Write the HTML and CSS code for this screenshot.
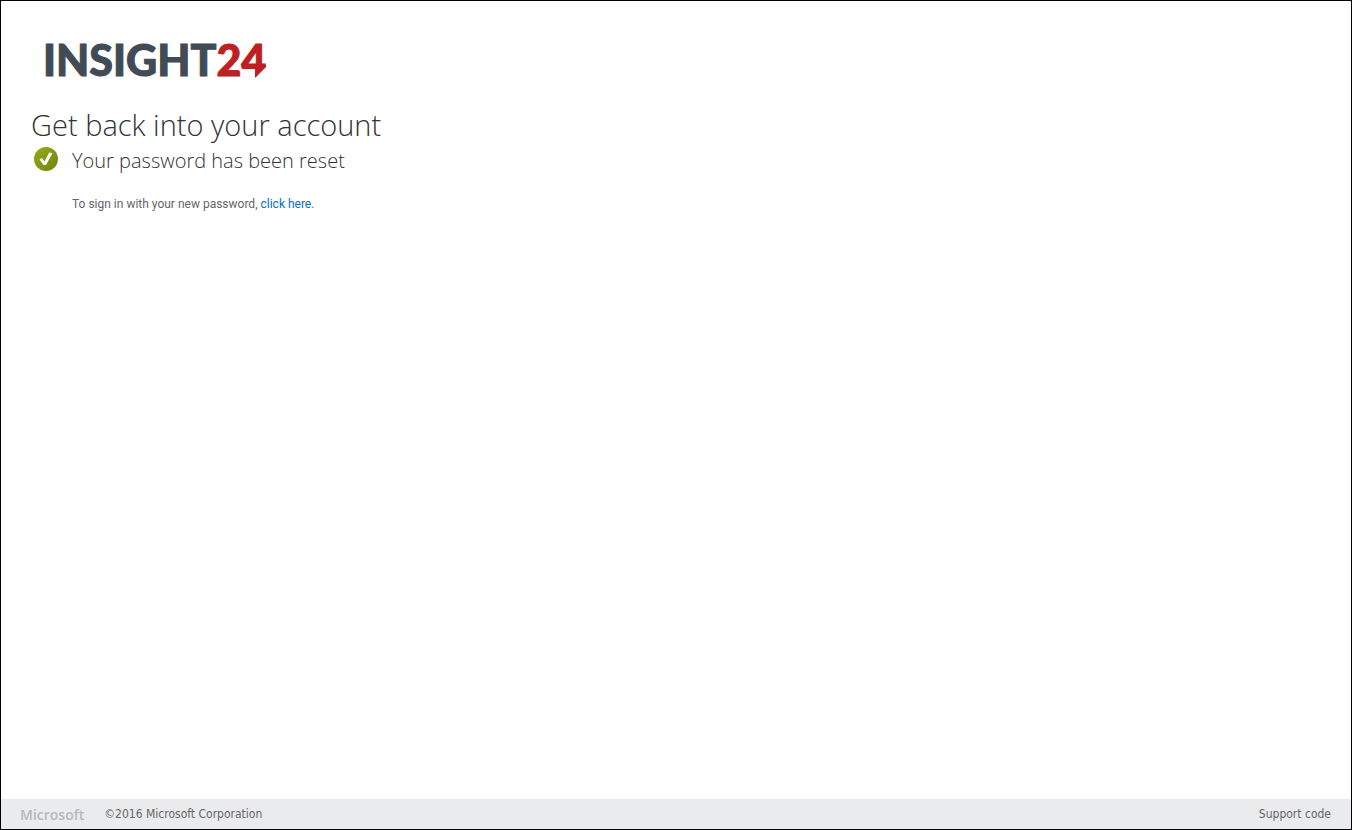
FILE: index.html
```
<!DOCTYPE html>
<html lang="en">
<head>
<meta charset="utf-8">
<title>Get back into your account</title>
<link rel="stylesheet" href="styles.css">
</head>
<body>
<main class="content">
  <div class="logo"><span>INSIGHT</span><span class="logo-number">24<svg class="logo-tip" viewBox="0 0 16 16" aria-hidden="true"><path d="M16 2V16H4Z" fill="#fff"/><path d="M5 2H16V4L5 15Z" fill="#bd2023"/></svg></span></div>
  <h1 class="title">Get back into your account</h1>
  <section class="status">
    <svg class="status-icon" viewBox="0 0 24 24" aria-hidden="true">
      <defs><linearGradient id="green" x1="0" y1="0" x2="1" y2="1"><stop offset="0" stop-color="#93ae18"/><stop offset="1" stop-color="#6f850f"/></linearGradient></defs>
      <circle cx="12" cy="12" r="12" fill="url(#green)"/>
      <path d="M5.5 12.5L8 11L10.5 14.5L15.2 5.5L18.5 6.2L12 18H9.5Z" fill="#fff"/>
    </svg>
    <div>
      <h2 class="status-title">Your password has been reset</h2>
      <p class="message">To sign in with your new password, <a class="link" href="#signin">click here</a>.</p>
    </div>
  </section>
</main>
<footer class="footer">
  <span class="brand">Microsoft</span>
  <span>©2016 Microsoft Corporation</span>
  <a class="support" href="#support">Support code</a>
</footer>
</body>
</html>
```
FILE: styles.css
```
* { box-sizing: border-box; }
body {
  margin: 0;
  min-height: 100vh;
  display: flex;
  flex-direction: column;
  border: 1px solid #000;
  background: #fff;
  color: #666;
  font-family: "Open Sans", "Noto Sans", sans-serif;
  font-size: 12px;
}
.content { flex: 1; padding: 31px 30px; }
.logo {
  display: flex;
  padding-left: 12px;
  color: #414b55;
  font: 900 43px/56px Lato, sans-serif;
  -webkit-text-stroke: 1px currentColor;
}
.logo-number { position: relative; color: #bd2023; }
.logo-tip { position: absolute; right: 0; bottom: 9px; width: 16px; height: 16px; }
.title { margin: 15px 0 0; color: #333; font-size: 29px; font-weight: 300; line-height: 44px; }
.status { display: flex; gap: 14px; padding-left: 3px; }
.status-icon { flex: none; width: 24px; height: 24px; }
.status-title { margin: 0; color: #333; font-size: 20px; font-weight: 300; line-height: 28px; }
.message { margin: 19px 0 0; font-family: Roboto, sans-serif; line-height: 20px; }
.link { color: #0072c6; text-decoration: none; }
.footer {
  display: flex;
  align-items: center;
  gap: 20px;
  height: 30px;
  padding: 0 20px 0 19px;
  background: #eaebec;
  color: #666;
  font-family: "DejaVu Sans Condensed", "DejaVu Sans", sans-serif;
  font-size: 12px;
}
.brand { color: #b8b9ba; font-family: "Open Sans", sans-serif; font-size: 14px; font-weight: 600; }
.support { margin-left: auto; color: #666; text-decoration: none; }
```
